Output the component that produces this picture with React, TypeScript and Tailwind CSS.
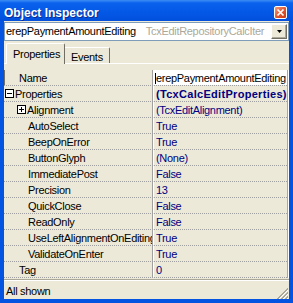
type Prop = {
  name: string
  value: string
  level: 0 | 1
  box?: 'open' | 'closed'
  bold?: boolean
  editing?: boolean
}

const PROPS: Prop[] = [
  { name: 'Name', value: 'erepPaymentAmountEditing', level: 0, editing: true },
  { name: 'Properties', value: '(TcxCalcEditProperties)', level: 0, box: 'open', bold: true },
  { name: 'Alignment', value: '(TcxEditAlignment)', level: 1, box: 'closed' },
  { name: 'AutoSelect', value: 'True', level: 1 },
  { name: 'BeepOnError', value: 'True', level: 1 },
  { name: 'ButtonGlyph', value: '(None)', level: 1 },
  { name: 'ImmediatePost', value: 'False', level: 1 },
  { name: 'Precision', value: '13', level: 1 },
  { name: 'QuickClose', value: 'False', level: 1 },
  { name: 'ReadOnly', value: 'False', level: 1 },
  { name: 'UseLeftAlignmentOnEditing', value: 'True', level: 1 },
  { name: 'ValidateOnEnter', value: 'True', level: 1 },
  { name: 'Tag', value: '0', level: 0 },
]

function ExpandBox({ open }: { open: boolean }) {
  return (
    <svg width="9" height="9" className="shrink-0 mt-[3px]" shapeRendering="crispEdges">
      <rect x="0.5" y="0.5" width="8" height="8" fill="#fff" stroke="#000" />
      <path d="M2 4.5h5" stroke="#000" />
      {!open && <path d="M4.5 2v5" stroke="#000" />}
    </svg>
  )
}

function PropRow({ p }: { p: Prop }) {
  // indent: level 0 box at x5, level 0 leaf text at x19, level 1 box at x17, leaf at x28
  let pad = 'pl-[15px]'
  if (p.box) pad = p.level === 0 ? 'pl-[1px]' : 'pl-[13px]'
  else if (p.level === 1) pad = 'pl-[24px]'

  return (
    <div className="h-[16px] flex border-b border-dotted border-[#a0a0a0]">
      <div
        className={`w-[148px] shrink-0 flex items-start overflow-hidden whitespace-nowrap ${pad} ${
          p.editing ? 'shadow-[inset_1px_0_0_#716f64]' : ''
        }`}
      >
        {p.box && <ExpandBox open={p.box === 'open'} />}
        <span className={`mt-[2px] leading-[13px] ${p.box ? 'ml-[1px]' : ''}`}>{p.name}</span>
      </div>
      <div className="w-[2px] shrink-0 border-l border-[#a0a0a0] border-r border-r-white" />
      {p.editing ? (
        <div className="flex-1 min-w-0 flex items-start bg-white overflow-hidden whitespace-nowrap">
          <span className="w-px h-[11px] mt-[3px] ml-[1px] bg-black shrink-0" />
          <span className="mt-[2px] leading-[13px] text-black">{p.value}</span>
        </div>
      ) : (
        <div
          className={`flex-1 min-w-0 flex items-start pl-[2px] overflow-hidden whitespace-nowrap text-[#000080] ${
            p.bold ? 'font-bold tracking-[0.3px]' : ''
          }`}
        >
          <span className="mt-[2px] leading-[13px]">{p.value}</span>
        </div>
      )}
    </div>
  )
}

export default function App() {
  return (
    <div className="w-[293px] h-[303px] flex flex-col overflow-hidden bg-[#0553e1] font-['Liberation_Sans',Arial,sans-serif] text-[11px] tracking-[-0.3px] text-black select-none">
      {/* caption */}
      <div className="h-[21px] shrink-0 flex items-start bg-[linear-gradient(to_bottom,#3d8df5_0px,#0a62ec_3px,#0458e6_12px,#0250dc_21px)]">
        <span className="pl-[4px] pt-[6px] text-[12px] leading-[14px] font-bold tracking-normal text-white [text-shadow:1px_1px_0_#0b2a96]">
          Object Inspector
        </span>
        <div className="ml-auto mt-[6px] mr-[6px] w-[13px] h-[13px] rounded-[2px] border border-white bg-[linear-gradient(135deg,#f29a7c,#e2562f_55%,#c53a13)] flex items-center justify-center">
          <svg width="11" height="11" viewBox="0 0 11 11">
            <path d="M2.5 2.5l6 6M8.5 2.5l-6 6" stroke="#fff" strokeWidth="1.7" />
          </svg>
        </div>
      </div>

      {/* client */}
      <div className="mx-[4px] h-[278px] shrink-0 flex flex-col bg-[#ece9d8]">
        {/* component selector */}
        <div className="mt-[1px] h-[19px] shrink-0 flex border border-[#7f9db9] bg-white">
          <div className="flex-1 min-w-0 flex items-center pl-[1px] overflow-hidden whitespace-nowrap leading-[13px]">
            <span>erepPaymentAmountEditing</span>
            <span className="ml-[10px] text-[#aca899]">TcxEditRepositoryCalcIter</span>
          </div>
          <div className="w-[16px] my-[1px] mr-[1px] shrink-0 flex items-center justify-center bg-[#ece9d8] border border-t-white border-l-white border-r-[#716f64] border-b-[#716f64] shadow-[inset_-1px_-1px_0_#aca899]">
            <svg width="5" height="3" viewBox="0 0 5 3">
              <path d="M0 0h5L2.5 3z" fill="#000" />
            </svg>
          </div>
        </div>

        {/* tabs */}
        <div className="mt-[1px] h-[22px] shrink-0 flex items-end pl-[2px] border-b border-white">
          <div className="relative z-10 -mb-px h-[21px] w-[59px] shrink-0 pl-[6px] pt-[4px] leading-[13px] bg-[#ece9d8] border-l border-t border-white border-r border-r-[#716f64] rounded-t-[2px]">
            Properties
          </div>
          <div className="h-[16px] w-[45px] shrink-0 pl-[6px] pt-[3px] leading-[13px] border-t border-white border-r border-r-[#716f64] rounded-tr-[2px]">
            Events
          </div>
        </div>

        <div className="h-[6px] shrink-0" />

        {/* property grid */}
        <div className="h-[208px] shrink-0 flex">
          <div className="w-[283px] flex flex-col">
            {PROPS.map(p => (
              <PropRow key={p.name} p={p} />
            ))}
          </div>
          <div className="w-px bg-[#aca899]" />
          <div className="w-px bg-white" />
        </div>

        {/* status */}
        <div className="mt-[1px] h-[2px] shrink-0 border-t border-[#aca899] border-b border-b-white" />
        <div className="flex-1 flex">
          <span className="pl-[2px] pt-[4px] leading-[13px]">All shown</span>
          <svg width="12" height="12" className="ml-auto mr-[1px] self-end" shapeRendering="crispEdges">
            {[0, 4, 8].map(d => (
              <g key={d}>
                <path d={`M${12 - d - 1} 12L12 ${12 - d - 1}`} stroke="#fff" />
                <path d={`M${12 - d - 2} 12L12 ${12 - d - 2}`} stroke="#aca899" />
                <path d={`M${12 - d - 3} 12L12 ${12 - d - 3}`} stroke="#aca899" />
              </g>
            ))}
          </svg>
        </div>
      </div>
    </div>
  )
}
